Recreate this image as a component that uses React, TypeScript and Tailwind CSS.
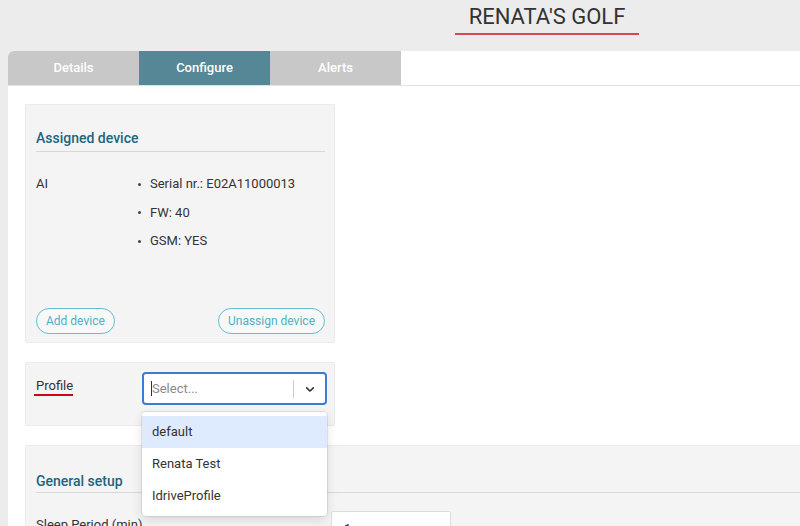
import React from 'react';

const font = { fontFamily: 'Roboto, "Liberation Sans", sans-serif' };

const App: React.FC = () => {
  const tabs = ['Details', 'Configure', 'Alerts'];
  const active = 'Configure';

  return (
    <div className="w-[800px] h-[526px] overflow-hidden bg-[#ececec] text-[#333]" style={font}>
      {/* header */}
      <div className="h-[51px] flex items-center pl-[294px]">
        <div className="mx-auto -mt-[12px] flex flex-col">
          <h1 className="text-[22px] leading-[26px] text-[#333] px-[14px] pb-[3px]">RENATA'S GOLF</h1>
          <div className="h-[2px] bg-[#d9474c]" />
        </div>
      </div>

      {/* panel */}
      <div className="ml-[8px] w-[820px] bg-white rounded-tl-[6px] h-[475px]">
        <div className="flex h-[35px] border-b border-[#e2e2e2]">
          {tabs.map((t, i) => (
            <div
              key={t}
              className={`w-[131px] h-[34px] flex items-center justify-center text-[13px] font-medium text-white ${
                t === active ? 'bg-[#568796]' : 'bg-[#c8c8c8]'
              } ${i === 0 ? 'rounded-tl-[6px]' : ''}`}
            >
              {t}
            </div>
          ))}
        </div>

        <div className="pl-[17px] pt-[18px] flex flex-col">
          {/* assigned device */}
          <div className="w-[310px] h-[239px] bg-[#f4f4f4] border border-[#ebebeb] rounded-[2px] pl-[10px] pr-[9px] pt-[24px] pb-[8px] flex flex-col">
            <h2 className="text-[14px] leading-[18px] font-medium text-[#22657e] pb-[4px] border-b border-[#d8d8d8]">Assigned device</h2>
            <div className="flex text-[13px] mt-[24px]">
              <div className="w-[102px] leading-[16px]">AI</div>
              <ul className="flex flex-col gap-[12.5px]">
                {['Serial nr.: E02A11000013', 'FW: 40', 'GSM: YES'].map((s) => (
                  <li key={s} className="flex items-center leading-[16px]">
                    <span className="w-[3px] h-[3px] rounded-full bg-[#444] mr-[9px]" />
                    {s}
                  </li>
                ))}
              </ul>
            </div>
            <div className="mt-auto flex justify-between">
              <button className="h-[26px] px-[9px] rounded-full border border-[#62bfd4] text-[12px] text-[#4fb0c8] bg-white/40">
                Add device
              </button>
              <button className="h-[26px] px-[9px] rounded-full border border-[#62bfd4] text-[12px] text-[#4fb0c8] bg-white/40">
                Unassign device
              </button>
            </div>
          </div>

          {/* profile */}
          <div className="relative w-[310px] h-[64px] mt-[19px] bg-[#f4f4f4] border border-[#ebebeb] rounded-[2px] flex pt-[9px] pl-[10px] z-10">
            <div className="w-[106px] pt-[1px]">
              <span className="text-[13px] border-b-2 border-[#d0021b] pb-[1px] inline-block leading-[15px] -ml-[2px] pl-[2px]">Profile</span>
            </div>
            <div className="relative">
              <div className="w-[185px] h-[33px] bg-white border-2 border-[#3a7bd5] rounded-[4px] flex items-center">
                <div className="flex-1 flex items-center pl-[7px] text-[13px] text-[#8a8a8a]">
                  <span className="w-px h-[15px] bg-[#333]" />
                  Select...
                </div>
                <span className="w-px h-[18px] bg-[#ccc]" />
                <div className="w-[31px] flex justify-center">
                  <svg width="14" height="14" viewBox="0 0 20 20" fill="#333">
                    <path d="M4.516 7.548c0.436-0.446 1.043-0.481 1.576 0l3.908 3.747 3.908-3.747c0.533-0.481 1.141-0.446 1.574 0 0.436 0.445 0.408 1.197 0 1.615-0.406 0.418-4.695 4.502-4.695 4.502-0.217 0.223-0.502 0.335-0.787 0.335s-0.57-0.112-0.789-0.335c0 0-4.287-4.084-4.695-4.502s-0.436-1.17 0-1.615z" />
                  </svg>
                </div>
              </div>
              {/* dropdown menu */}
              <div className="absolute left-0 top-[40px] w-[185px] bg-white rounded-[4px] shadow-[0_0_0_1px_rgba(0,0,0,0.08),0_4px_11px_rgba(0,0,0,0.12)] py-[4px] text-[13px] text-[#333]">
                <div className="h-[32px] flex items-center px-[10px] bg-[#deebff]">default</div>
                <div className="h-[32px] flex items-center px-[10px]">Renata Test</div>
                <div className="h-[32px] flex items-center px-[10px]">IdriveProfile</div>
              </div>
            </div>
          </div>

          {/* general setup */}
          <div className="w-[790px] h-[100px] mt-[19px] bg-[#f4f4f4] border border-[#ebebeb] rounded-[2px] px-[10px] pt-[26px]">
            <h2 className="text-[14px] leading-[18px] font-medium text-[#22657e] pb-[2px] border-b border-[#d8d8d8]">General setup</h2>
            <div className="flex items-start mt-[18px]">
              <div className="w-[295px] text-[13px] pt-[4px]">Sleep Period (min)</div>
              <div className="w-[120px] h-[30px] bg-white border border-[#ddd] rounded-[2px] px-[12px] pt-[7px] text-[13px]">1</div>
            </div>
          </div>
        </div>
      </div>
    </div>
  );
};

export default App;
